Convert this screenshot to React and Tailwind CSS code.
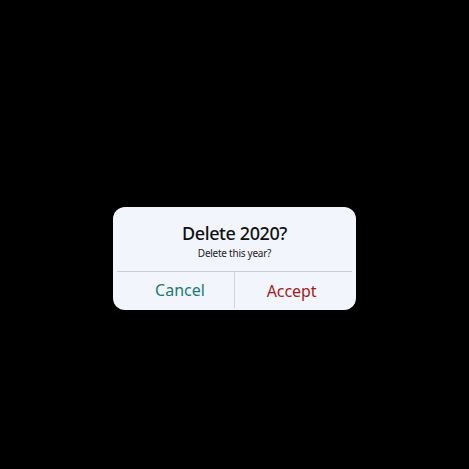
import React from 'react';

const App = () => {
  return (
    <div className="w-[469px] h-[469px] bg-black flex justify-center pt-[207px]" style={{ fontFamily: '"Noto Sans", "Open Sans", sans-serif' }}>
      <div className="w-[243px] h-[103px] bg-[#f2f5fb] rounded-[12px] flex flex-col">
        {/* Title and message */}
        <div className="flex flex-col items-center pt-[13px] h-[64px]">
          <div className="text-[18px] leading-[26px] font-medium tracking-[-0.4px] text-[#111]">Delete 2020?</div>
          <div className="text-[10px] leading-[14px] tracking-[-0.25px] text-[#222]">Delete this year?</div>
        </div>

        <div className="mx-[4px] border-t border-[#c9cdd6]" />

        {/* Buttons */}
        <div className="flex flex-1">
          <button className="w-[122px] pl-[13px] text-[16px] text-[#1e7a76] border-r border-[#d0d4dc] mb-[2px]">Cancel</button>
          <button className="w-[121px] pr-[8px] text-[16px] tracking-[-0.1px] text-[#a11d1d]">Accept</button>
        </div>
      </div>
    </div>
  );
};

export default App;
